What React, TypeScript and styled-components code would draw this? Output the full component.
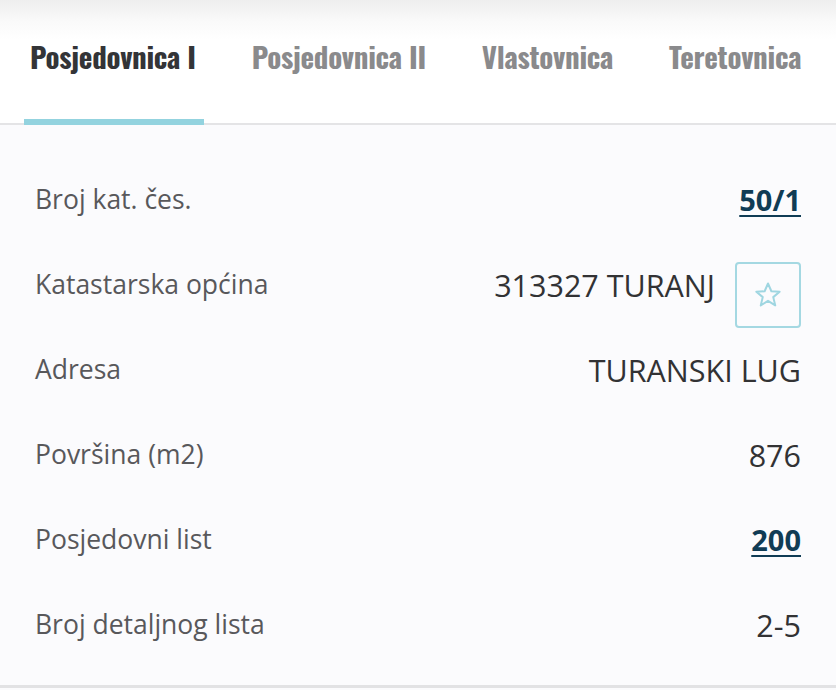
import * as React from 'react'
import styled, { createGlobalStyle } from 'styled-components'

let GlobalStyle = createGlobalStyle`
    html, body {
        margin: 0;
        padding: 0;
        background: #fbfbfd;
    }
    body {
        font-family: "Source Sans Pro", "Open Sans", "Noto Sans", sans-serif;
    }
`

let Page = styled.div`
    width: 836px;
    height: 690px;
    background: #fbfbfd;
    overflow: hidden;
    box-sizing: border-box;
`

let TabBar = styled.div`
    display: flex;
    align-items: flex-end;
    gap: 42px;
    height: 125px;
    padding-left: 24px;
    box-sizing: border-box;
    border-bottom: 2px solid #e4e4e6;
    background: linear-gradient(to bottom, #eeeeee 0px, #fafafa 22px, #ffffff 40px, #ffffff 100%);
`

let Tab = styled.div<{ active?: boolean }>`
    font-family: "Oswald", "Liberation Sans Narrow", "DejaVu Sans Condensed", sans-serif;
    font-weight: 700;
    font-size: 29px;
    letter-spacing: -0.3px;
    color: ${p => (p.active ? '#333437' : '#8a8a8c')};
    padding: 0 8px 42px 6px;
    margin-bottom: -2px;
    white-space: nowrap;
    border-bottom: 6px solid ${p => (p.active ? '#93d3df' : 'transparent')};
`

let List = styled.div`
    display: flex;
    flex-direction: column;
    padding: 32px 35px 0 35px;
    height: 563px;
    box-sizing: border-box;
    border-bottom: 3px solid #e2e2e4;
`

let Row = styled.div`
    display: flex;
    align-items: center;
    justify-content: space-between;
    height: 85px;
`

let Label = styled.div`
    font-size: 26.5px;
    color: #58585b;
    margin-top: -1px;
`

let Value = styled.div`
    display: flex;
    align-items: center;
    gap: 20px;
    font-size: 30.5px;
    color: #323234;
`

let LinkValue = styled.a`
    font-size: 29px;
    font-weight: 700;
    color: #103c55;
    text-decoration: underline;
    text-underline-offset: 4px;
    text-decoration-thickness: 2px;
`

let StarButton = styled.div`
    width: 66px;
    height: 66px;
    margin-top: 20px;
    box-sizing: border-box;
    border: 2px solid #a4d8e2;
    border-radius: 4px;
    display: flex;
    align-items: center;
    justify-content: center;
    background: #fbfbfd;
`

let Star = () => (
    <svg width="30" height="30" viewBox="0 0 24 24" fill="none" stroke="#9fd6e1" strokeWidth="1.6" strokeLinejoin="round">
        <polygon points="12,2.8 14.7,9 21.3,9.4 16.2,13.7 17.8,20.3 12,16.7 6.2,20.3 7.8,13.7 2.7,9.4 9.3,9" />
    </svg>
)

let tabs = ['Posjedovnica I', 'Posjedovnica II', 'Vlastovnica', 'Teretovnica']

export default function App() {
    return (
        <Page>
            <GlobalStyle />
            <TabBar>
                {tabs.map((t, i) => (
                    <Tab key={t} active={i === 0}>{t}</Tab>
                ))}
            </TabBar>
            <List>
                <Row>
                    <Label>Broj kat. čes.</Label>
                    <Value><LinkValue>50/1</LinkValue></Value>
                </Row>
                <Row>
                    <Label>Katastarska općina</Label>
                    <Value>
                        <span>313327 TURANJ</span>
                        <StarButton><Star /></StarButton>
                    </Value>
                </Row>
                <Row>
                    <Label>Adresa</Label>
                    <Value>TURANSKI LUG</Value>
                </Row>
                <Row>
                    <Label>Površina (m2)</Label>
                    <Value>876</Value>
                </Row>
                <Row>
                    <Label>Posjedovni list</Label>
                    <Value><LinkValue>200</LinkValue></Value>
                </Row>
                <Row>
                    <Label>Broj detaljnog lista</Label>
                    <Value>2-5</Value>
                </Row>
            </List>
        </Page>
    )
}
